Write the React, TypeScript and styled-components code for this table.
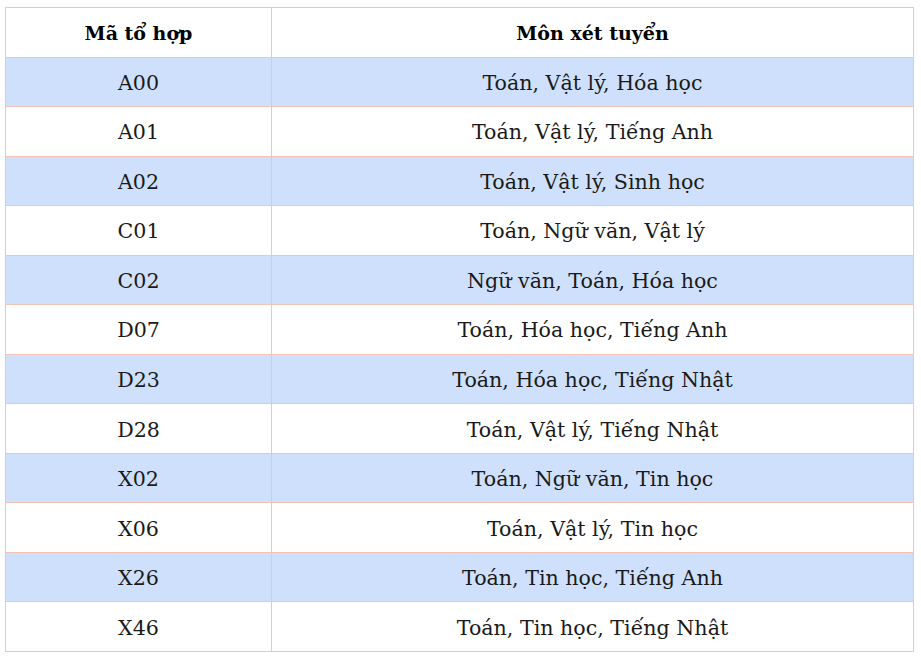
import React from "react";
import styled, { createGlobalStyle } from "styled-components";

const Global = createGlobalStyle`
  html, body { margin: 0; padding: 0; background: #ffffff; }
  body { font-family: "DejaVu Serif", "Liberation Serif", serif; }
`;

const Table = styled.div`
  margin: 7px 0 0 5px;
  width: 909px;
  height: 645px;
  box-sizing: border-box;
  border-top: 1px solid #f2c4b6;
  border-left: 1px solid #f2c4b6;
  display: grid;
  grid-template-rows: repeat(13, 1fr);
`;

const Row = styled.div<{ $shade?: boolean }>`
  display: grid;
  grid-template-columns: 266px 1fr;
  background: ${(p) => (p.$shade ? "#cfe0fc" : "#ffffff")};
`;

const Cell = styled.div<{ $head?: boolean }>`
  display: flex;
  align-items: center;
  justify-content: center;
  padding-top: 2px;
  border-right: 1px solid #f2c4b6;
  border-bottom: 1px solid #f2c4b6;
  font-size: ${(p) => (p.$head ? "19px" : "20.6px")};
  font-weight: ${(p) => (p.$head ? 700 : 400)};
  color: ${(p) => (p.$head ? "#000000" : "#1a1a1a")};
  white-space: nowrap;
`;

const rows: [string, string][] = [
  ["A00", "Toán, Vật lý, Hóa học"],
  ["A01", "Toán, Vật lý, Tiếng Anh"],
  ["A02", "Toán, Vật lý, Sinh học"],
  ["C01", "Toán, Ngữ văn, Vật lý"],
  ["C02", "Ngữ văn, Toán, Hóa học"],
  ["D07", "Toán, Hóa học, Tiếng Anh"],
  ["D23", "Toán, Hóa học, Tiếng Nhật"],
  ["D28", "Toán, Vật lý, Tiếng Nhật"],
  ["X02", "Toán, Ngữ văn, Tin học"],
  ["X06", "Toán, Vật lý, Tin học"],
  ["X26", "Toán, Tin học, Tiếng Anh"],
  ["X46", "Toán, Tin học, Tiếng Nhật"],
];

export default function App() {
  return (
    <>
      <Global />
      <Table>
        <Row>
          <Cell $head>Mã tổ hợp</Cell>
          <Cell $head>Môn xét tuyển</Cell>
        </Row>
        {rows.map(([code, subj], i) => (
          <Row key={code} $shade={i % 2 === 0}>
            <Cell>{code}</Cell>
            <Cell>{subj}</Cell>
          </Row>
        ))}
      </Table>
    </>
  );
}
